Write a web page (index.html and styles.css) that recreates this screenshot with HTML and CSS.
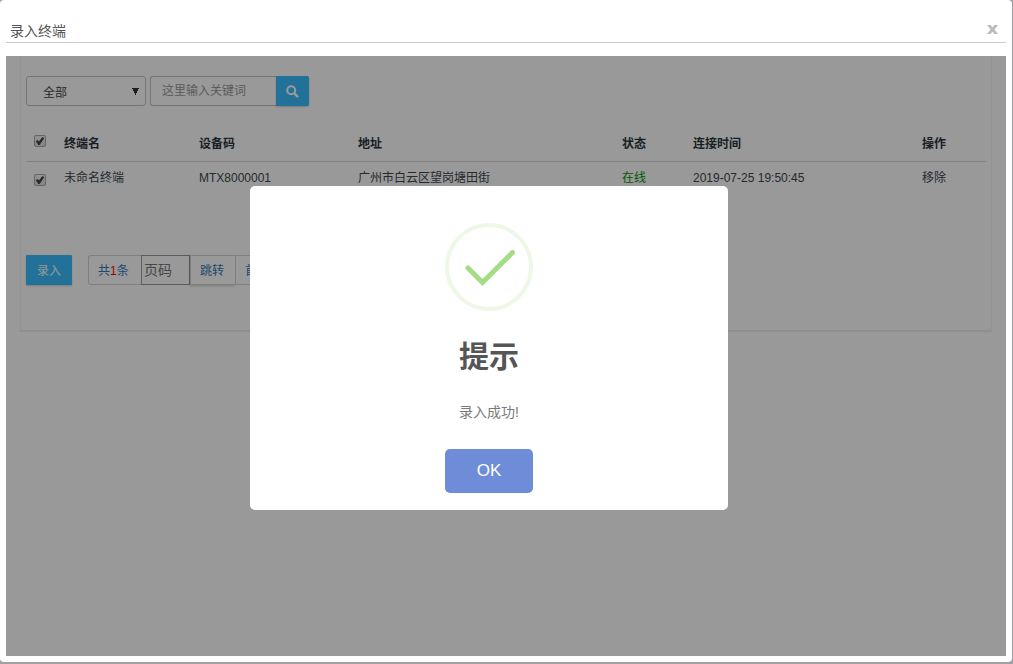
FILE: index.html
```html
<!DOCTYPE html>
<html lang="zh-CN">
<head>
<meta charset="utf-8">
<title>录入终端</title>
<link rel="stylesheet" href="styles.css">
</head>
<body>
<section class="window">
  <header class="window-head">
    <h1 class="window-title">录入终端</h1>
    <button class="window-close" type="button" aria-label="关闭">
      <svg width="11" height="9" viewBox="0 0 11 9"><path d="M0 0h3.7l1.8 2.5L7.3 0H11L7.4 4.4 11 9H7.3L5.5 6.4 3.7 9H0l3.6-4.6z" fill="currentColor"/></svg>
    </button>
  </header>
  <div class="frame">
    <main class="panel">
      <form class="toolbar">
        <select class="filter" aria-label="范围"><option>全部</option></select>
        <div class="search">
          <input class="search-input" type="text" placeholder="这里输入关键词" aria-label="关键词">
          <button class="search-button" type="button" aria-label="搜索">
            <svg width="13" height="13" viewBox="0 0 13 13" fill="none" stroke="currentColor"><circle cx="5.2" cy="5.2" r="4" stroke-width="2.1"/><path d="M8.4 8.4l2.9 2.9" stroke-width="2.5" stroke-linecap="round"/></svg>
          </button>
        </div>
      </form>
      <table class="devices">
        <colgroup><col class="col-check"><col class="col-name"><col class="col-code"><col class="col-address"><col class="col-state"><col class="col-time"><col class="col-action"></colgroup>
        <thead>
          <tr><th><input class="check" type="checkbox" checked aria-label="全选"></th><th>终端名</th><th>设备码</th><th>地址</th><th>状态</th><th>连接时间</th><th>操作</th></tr>
        </thead>
        <tbody>
          <tr><td><input class="check" type="checkbox" checked aria-label="未命名终端"></td><td>未命名终端</td><td>MTX8000001</td><td>广州市白云区望岗塘田街</td><td class="online">在线</td><td>2019-07-25 19:50:45</td><td><a class="remove" href="#">移除</a></td></tr>
        </tbody>
      </table>
      <footer class="actions">
        <button class="submit" type="button">录入</button>
        <nav class="pager" aria-label="分页">
          <span class="pager-item">共<b class="count">1</b>条</span>
          <input class="pager-input" type="text" placeholder="页码" aria-label="页码">
          <button class="pager-item pager-jump" type="button">跳转</button>
          <a class="pager-item" href="#">首页</a>
        </nav>
      </footer>
    </main>
    <div class="overlay">
      <div class="dialog" role="alertdialog" aria-labelledby="dialog-title" aria-describedby="dialog-text">
        <svg class="dialog-icon" viewBox="0 0 88 88" fill="none">
          <circle cx="44" cy="44" r="42" stroke="#edf8e7" stroke-width="4"/>
          <path d="M23 45l14.5 14.5L67.5 29.5" stroke="#a5dc86" stroke-width="5" stroke-linecap="round"/>
        </svg>
        <h2 class="dialog-title" id="dialog-title">提示</h2>
        <p class="dialog-text" id="dialog-text">录入成功!</p>
        <button class="dialog-ok" type="button">OK</button>
      </div>
    </div>
  </div>
</section>
</body>
</html>
```
FILE: styles.css
```css
* { box-sizing: border-box; }

body {
  margin: 0;
  padding: 0 1px 2px 0;
  min-height: 100vh;
  display: flex;
  background: #a0a0a6;
  font-family: "Liberation Sans", "Noto Sans CJK SC", sans-serif;
  font-size: 12px;
  line-height: 18px;
  color: #3c484f;
}

button, input, select { margin: 0; font: inherit; }

.window {
  flex: 1;
  display: flex;
  flex-direction: column;
  padding: 18px 6px 6px;
  background: #fff;
  border-radius: 4px;
}

.window-head {
  display: flex;
  justify-content: space-between;
  align-items: flex-start;
  height: 25px;
  padding: 3px 8px 0 4px;
  border-bottom: 1px solid #ccc;
}

.window-title {
  margin: 0;
  font-size: 14px;
  line-height: 20px;
  font-weight: 400;
  color: #555;
}

.window-close {
  display: flex;
  padding: 4px 0;
  border: 0;
  background: none;
  color: #bbb;
}

.frame {
  position: relative;
  flex: 1;
  margin-top: 13px;
  padding: 0 14px;
  background: #fff;
}

.panel {
  padding: 20px 5px 45px;
  border: 1px solid #f4f4f4;
  border-top: 0;
  border-bottom-color: #ececec;
  box-shadow: 0 1px 1px rgba(0, 0, 0, .05);
}

.toolbar { display: flex; gap: 4px; }

.filter {
  width: 120px;
  height: 30px;
  padding: 3px 16px 0;
  appearance: none;
  border: 1px solid #c4c4c4;
  border-radius: 3px;
  color: #444;
  background: conic-gradient(from -26deg at 50% 100%, #333 52deg, transparent 0) right 6px top 11px / 7px 7px no-repeat;
}

.search { display: flex; width: 159px; }

.search-input {
  flex: 1;
  min-width: 0;
  height: 30px;
  padding: 0 11px;
  border: 1px solid #c4c4c4;
  border-right: 0;
  border-radius: 3px 0 0 3px;
  background: none;
}

.search-input::placeholder { color: #999; }

.search-button, .submit {
  border: 0;
  background: #38bcff;
  color: #fff;
  box-shadow: 0 1px 2px rgba(0, 0, 0, .2);
}

.search-button {
  display: flex;
  align-items: center;
  justify-content: center;
  width: 33px;
  padding: 1px 0 0;
  border-radius: 0 2px 2px 0;
}

.devices {
  width: 100%;
  margin-top: 21px;
  table-layout: fixed;
  border-collapse: collapse;
}

.col-check { width: 30px; }
.col-name { width: 135px; }
.col-code { width: 159px; }
.col-address { width: 264px; }
.col-state { width: 71px; }
.col-time { width: 229px; }
.col-action { width: 72px; }

.devices th, .devices td {
  padding: 8px;
  text-align: left;
  vertical-align: top;
  white-space: nowrap;
}

.devices th {
  color: #2b363c;
  border-bottom: 1px solid #d8d8d8;
}

.devices td { padding-top: 7px; }
.devices .online { color: #009400; }
.remove { color: inherit; text-decoration: none; }

.check {
  display: block;
  width: 12px;
  height: 12px;
  appearance: none;
  border: 1px solid #aaa;
  border-radius: 2px;
  background: linear-gradient(#f4f4f4, #ddd);
}

.devices td .check { margin-top: 5px; }

.check:checked::before {
  content: "";
  display: block;
  width: 10px;
  height: 10px;
  background: #444;
  clip-path: polygon(8% 52%, 24% 40%, 40% 56%, 74% 10%, 92% 22%, 46% 90%, 34% 90%);
}

.actions {
  display: flex;
  align-items: stretch;
  gap: 16px;
  height: 30px;
  margin-top: 60px;
}

.submit { width: 46px; padding: 1px 0 0; border-radius: 1px; }
.pager { display: flex; }

.pager-item {
  display: flex;
  align-items: center;
  padding: 1px 9px 0;
  border: 1px solid #d4d4d4;
  border-right: 0;
  background: none;
  color: #337ab7;
  text-decoration: none;
}

.pager-item:first-child { width: 53px; border-radius: 3px 0 0 3px; }
.pager-item:last-child { border-right: 1px solid #d4d4d4; }
.pager-jump { width: 45px; box-shadow: 0 1px 2px rgba(0, 0, 0, .2); }
.count { font-weight: 400; color: #f00; }

.pager-input {
  width: 49px;
  padding: 0 2px;
  border: 1px solid #999;
  background: none;
  font-size: 14px;
}

.pager-input::placeholder { color: #757575; }

.overlay {
  position: absolute;
  inset: 0;
  display: flex;
  align-items: center;
  justify-content: center;
  padding: 0 34px 16px 0;
  background: rgba(0, 0, 0, .4);
}

.dialog {
  display: flex;
  flex-direction: column;
  align-items: center;
  width: 478px;
  padding: 37px 20px 17px;
  border-radius: 5px;
  background: #fff;
}

.dialog-icon { width: 88px; height: 88px; }

.dialog-title {
  margin: 26px 0 0;
  font-size: 30px;
  line-height: 40px;
  color: #555;
}

.dialog-text {
  margin: 25px 0 0;
  font-size: 14px;
  line-height: 20px;
  color: #797979;
}

.dialog-ok {
  width: 88px;
  height: 44px;
  margin-top: 27px;
  padding: 0;
  border: 0;
  border-radius: 5px;
  background: #6f8cd8;
  color: #fff;
  font-size: 17px;
}
```
